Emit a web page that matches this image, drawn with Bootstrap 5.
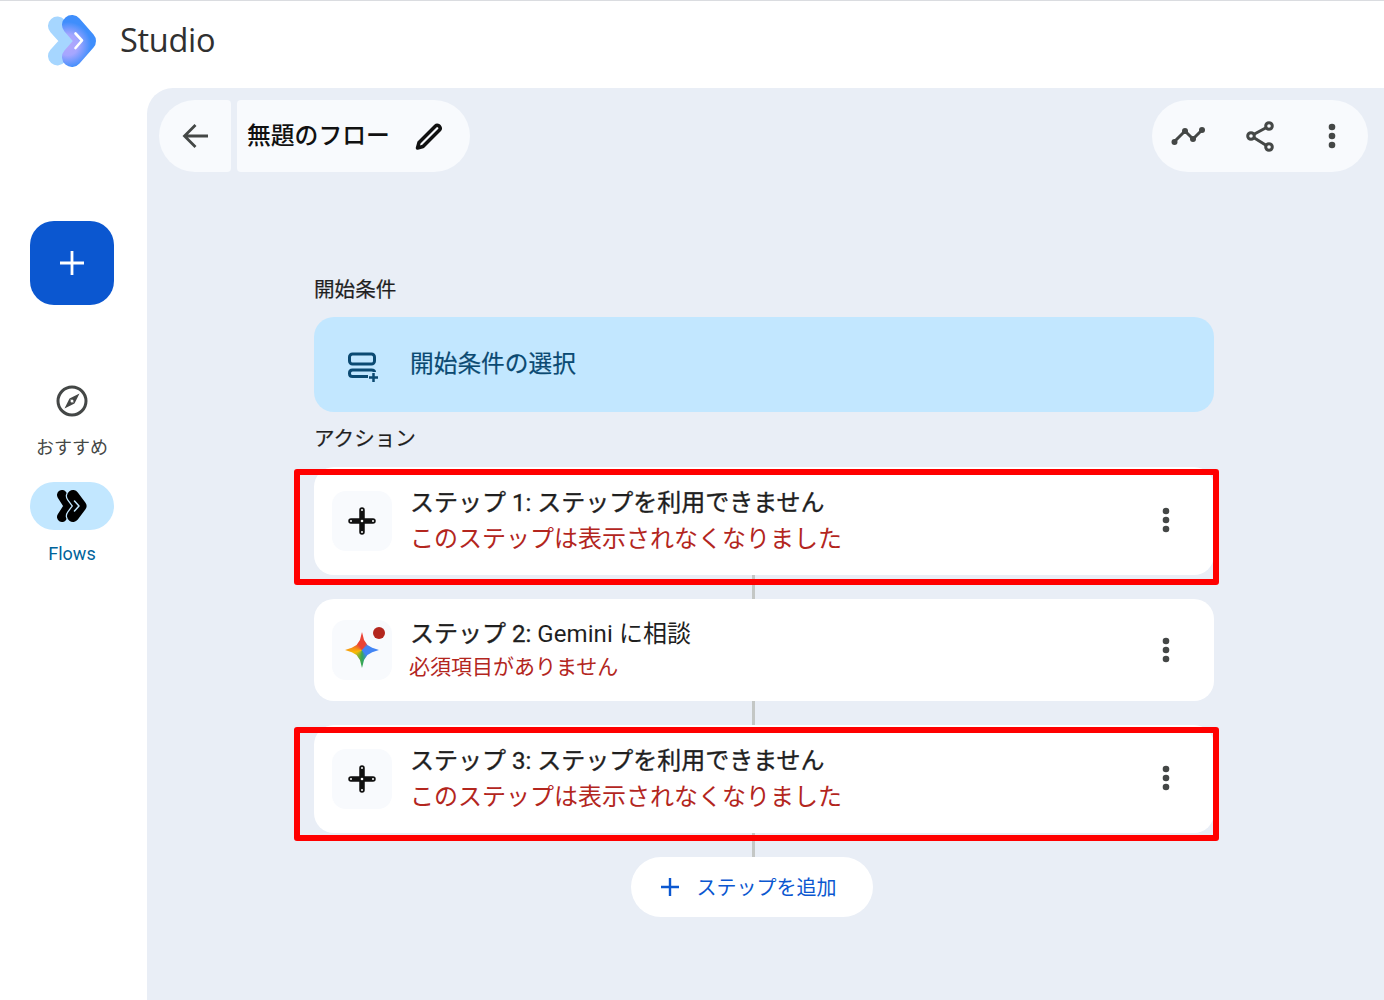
<!DOCTYPE html>
<html lang="ja"><head><meta charset="utf-8"><title>Studio</title>
<link href="https://cdn.jsdelivr.net/npm/bootstrap@5.3.0/dist/css/bootstrap.min.css" rel="stylesheet">
<style>
html,body{height:1000px;overflow:hidden}
body{font-family:Roboto,"Noto Sans CJK JP",sans-serif;background:#fff;color:#1f1f1f;border-top:1px solid #dadce0}
.app-head{height:87px;padding:0 0 8px 46px;gap:22px}
.brand{font-family:"Open Sans",Roboto,sans-serif;font-size:32.5px;color:#303030;letter-spacing:-.3px}
.rail{width:147px;padding:133px 0 0 30px}
.fab{width:84px;height:84px;border-radius:24px;background:#0b57d0;border:0}
.rail-item{width:84px;font-size:18px;color:#444746;line-height:24px}
.rail-item .slot{height:48px}
.rail-explore{margin-top:72px}
.rail-flows{margin-top:22px;color:#00639b}
.rail-flows .slot{background:#c2e7ff;border-radius:24px;margin-bottom:12px}
.rail-explore .slot{margin-bottom:11px}
.canvas{background:#e9eef6;border-top-left-radius:26px;padding:12px 16px 0 12px;height:913px}
.pill{background:#f8fafd;height:72px}
.pill-back{width:72px;border-radius:36px 4px 4px 36px}
.pill-title{width:233px;margin-left:6px;border-radius:4px 36px 36px 4px;padding-left:10px;font-size:23.8px;gap:24px;color:#111}
.pill-title span{font-weight:500;margin-top:2px}
.pill-actions{width:216px;border-radius:36px;padding:0 18px;justify-content:space-between}
.flow{width:900px;margin-left:155px}
.section-label{font-size:20.6px;line-height:30px;color:#1f1f1f;-webkit-text-stroke:.2px}
.start-label{margin-top:103px;margin-bottom:12px}
.trigger{height:95px;background:#c2e7ff;border-radius:20px;padding-left:32px;gap:30px;font-size:23.7px;color:#0b4a72;-webkit-text-stroke:.2px}
.action-label{margin-top:12px;margin-bottom:13px}
.step{background:#fff;border-radius:20px;padding:0 36px 0 18px;gap:18px}
.step-tall{height:108px}
.step-mid{height:102px}
.icon-box{width:60px;height:60px;background:#f8fafd;border-radius:14px;flex:none}
.step-title{font-size:24px;line-height:36px;color:#1f1f1f;-webkit-text-stroke:.35px}
.step-title .latin{-webkit-text-stroke:0;letter-spacing:.1px}
.step-sub{font-size:24px;line-height:36px;color:#b3261e}
.step-sub-sm{font-size:21px;line-height:30px;color:#b3261e;margin-left:-1px}
.step-body-tall{margin-top:-1px}
.step-body-mid{margin-top:-2px}
.step-tall .kebab{margin-top:-2px}
.connector{width:3px;height:24px;background:#c4c7c5;margin-left:438px}
.flag{position:absolute;top:2px;left:-20px;right:-5px;bottom:-10px;border:6px solid #f00;border-radius:3px;pointer-events:none}
.flag-b{bottom:-8px}
.add-btn{width:242px;height:60px;background:#fff;border:0;border-radius:30px;margin-left:317px;padding:0 8px 0 0;color:#0b57d0;font-size:20px;gap:17px}
.add-btn span{margin-top:2px}
.back-arrow{margin-left:2px}
.star{width:34px;height:36px;background:conic-gradient(from 0deg,#ea4335 0 8%,#4285f4 15% 38%,#34a853 50%,#fbbc04 70%,#ea4335 92%);clip-path:polygon(50% 0,56% 22%,66% 36%,80% 44%,100% 50%,80% 56%,66% 64%,56% 78%,50% 100%,44% 78%,34% 64%,20% 56%,0 50%,20% 44%,34% 36%,44% 22%)}
.red-dot{position:absolute;top:-5px;right:-6px;width:12px;height:12px;background:#b3261e;border-radius:50%}
</style></head>
<body>
<svg width="0" height="0" class="position-absolute"><defs>
<radialGradient id="lg" gradientUnits="userSpaceOnUse" cx="68" cy="45" r="23"><stop offset="0" stop-color="#b3a6fb"/><stop offset=".45" stop-color="#a5a6ff"/><stop offset="1" stop-color="#3f8efc"/></radialGradient>
<g id="kebab"><circle cx="12" cy="5" r="3.300"/><circle cx="12" cy="14" r="3.300"/><circle cx="12" cy="23" r="3.300"/></g>
<g id="stepplus"><path d="M15 4V26M4 15H26" stroke="#111" stroke-width="5.500" stroke-linecap="round"/><g fill="#fff"><circle cx="15" cy="15" r="1.300"/><circle cx="15" cy="4" r="1"/><circle cx="15" cy="26" r="1"/><circle cx="4" cy="15" r="1"/><circle cx="26" cy="15" r="1"/></g></g>
</defs></svg>

<header class="app-head d-flex align-items-center">
<svg width="52" height="56" viewBox="46 13 52 56" fill="none"><path d="M57.500 26L71 41L57.500 56" stroke="#a6d6ff" stroke-width="19" stroke-linecap="round" stroke-linejoin="round"/><path d="M72 25L86 41L72 57" stroke="url(#lg)" stroke-width="20" stroke-linecap="round" stroke-linejoin="round"/><path d="M75.500 33.500L82 40.500L75.500 48" stroke="#fff" stroke-width="2.600" stroke-linecap="round" stroke-linejoin="round"/></svg>
<span class="brand">Studio</span>
</header>

<div class="d-flex">
<nav class="rail flex-shrink-0">
<button class="fab d-flex align-items-center justify-content-center" aria-label="追加"><svg width="26" height="26" viewBox="0 0 26 26"><path d="M13 1V25M1 13H25" stroke="#fff" stroke-width="2.800"/></svg></button>
<div class="rail-item rail-explore text-center">
<div class="slot d-flex align-items-center justify-content-center"><svg width="32" height="32" viewBox="0 0 32 32"><circle cx="16" cy="16" r="14" fill="none" stroke="#444746" stroke-width="3"/><path d="M23.500 8.500L18.500 18.500L13.500 13.500Z" fill="#444746"/><path d="M8.500 23.500L13.500 13.500L18.500 18.500Z" fill="#444746"/><circle cx="16" cy="16" r="1.500" fill="#fff"/></svg></div>
おすすめ</div>
<div class="rail-item rail-flows text-center">
<div class="slot d-flex align-items-center justify-content-center"><svg width="32" height="34" viewBox="0 0 32 34" fill="none" stroke-linecap="round" stroke-linejoin="round"><path d="M6 6L13 17L6 28" stroke="#000" stroke-width="10"/><path d="M17 7L24.500 17L17 27" stroke="#c2e7ff" stroke-width="14.500"/><path d="M17 7L24.500 17L17 27" stroke="#000" stroke-width="12"/><path d="M18.500 12L23 17L18.500 22" stroke="#c2e7ff" stroke-width="1.500"/></svg></div>
Flows</div>
</nav>

<main class="canvas flex-grow-1">
<div class="d-flex justify-content-between">
<div class="d-flex">
<div class="pill pill-back d-flex align-items-center justify-content-center"><svg class="back-arrow" width="28" height="28" viewBox="0 0 28 28" fill="none"><path d="M26 14H3M13.500 3L2.500 14L13.500 25" stroke="#444746" stroke-width="2.800"/></svg></div>
<div class="pill pill-title d-flex align-items-center"><span>無題のフロー</span>
<svg width="30" height="30" viewBox="0 0 30 30" fill="none"><path d="M5 21.500L21.500 5Q23 3.500 25 5L25.500 5.500Q27 7.500 25.500 9L9 25.500L3.500 27Z" stroke="#111" stroke-width="3.500" stroke-linejoin="round"/></svg></div>
</div>
<div class="pill pill-actions d-flex align-items-center">
<svg width="36" height="36" viewBox="0 0 36 36" fill="none"><path d="M4 24L15 13L23 21L32 12" stroke="#444746" stroke-width="3"/><g fill="#444746"><circle cx="4.500" cy="24" r="3"/><circle cx="15" cy="13" r="3"/><circle cx="23" cy="21" r="3"/><circle cx="32" cy="12" r="3"/></g></svg>
<svg width="36" height="36" viewBox="0 0 36 36" fill="none" stroke="#444746" stroke-width="3"><circle cx="9" cy="18" r="3.300"/><circle cx="27" cy="8" r="3.300"/><circle cx="27" cy="29" r="3.300"/><path d="M12 16.300L24 9.700M12 19.700L24 27.300"/></svg>
<svg width="36" height="36" viewBox="-6 -4 36 36" fill="#444746"><use href="#kebab"/></svg>
</div>
</div>

<div class="flow">
<div class="section-label start-label">開始条件</div>
<div class="trigger d-flex align-items-center">
<svg width="34" height="34" viewBox="0 0 34 34" fill="none" stroke="#0b4a72" stroke-width="3"><rect x="3.500" y="6" width="25" height="10" rx="3"/><path d="M22 28.500H6.500Q3.500 28.500 3.500 25.500V25Q3.500 22 6.500 22H25.500Q28.500 22 28.500 24"/><path d="M27.500 25V34M23 29.500H32" stroke-width="2.500"/></svg>
<span>開始条件の選択</span></div>
<div class="section-label action-label">アクション</div>

<div class="step step-tall position-relative d-flex align-items-center">
<div class="icon-box d-flex align-items-center justify-content-center"><svg width="30" height="30" viewBox="0 0 30 30"><use href="#stepplus"/></svg></div>
<div class="flex-grow-1 step-body-tall"><div class="step-title">ステップ 1: ステップを利用できません</div><div class="step-sub">このステップは表示されなくなりました</div></div>
<svg class="kebab" width="24" height="28" viewBox="0 0 24 28" fill="#444746"><use href="#kebab"/></svg>
<div class="flag"></div></div>
<div class="connector"></div>

<div class="step step-mid d-flex align-items-center">
<div class="icon-box d-flex align-items-center justify-content-center"><div class="position-relative"><div class="star"></div><div class="red-dot"></div></div></div>
<div class="flex-grow-1 step-body-mid"><div class="step-title">ステップ 2: <span class="latin">Gemini に相談</span></div><div class="step-sub-sm">必須項目がありません</div></div>
<svg class="kebab" width="24" height="28" viewBox="0 0 24 28" fill="#444746"><use href="#kebab"/></svg>
</div>
<div class="connector"></div>

<div class="step step-tall position-relative d-flex align-items-center">
<div class="icon-box d-flex align-items-center justify-content-center"><svg width="30" height="30" viewBox="0 0 30 30"><use href="#stepplus"/></svg></div>
<div class="flex-grow-1 step-body-tall"><div class="step-title">ステップ 3: ステップを利用できません</div><div class="step-sub">このステップは表示されなくなりました</div></div>
<svg class="kebab" width="24" height="28" viewBox="0 0 24 28" fill="#444746"><use href="#kebab"/></svg>
<div class="flag flag-b"></div></div>
<div class="connector"></div>

<button class="add-btn d-flex align-items-center justify-content-center"><svg width="20" height="20" viewBox="0 0 20 20"><path d="M10 1V19M1 10H19" stroke="#0b57d0" stroke-width="2.400"/></svg><span>ステップを追加</span></button>
</div>
</main>
</div>
<script src="https://cdn.jsdelivr.net/npm/bootstrap@5.3.0/dist/js/bootstrap.bundle.min.js"></script>
</body></html>
